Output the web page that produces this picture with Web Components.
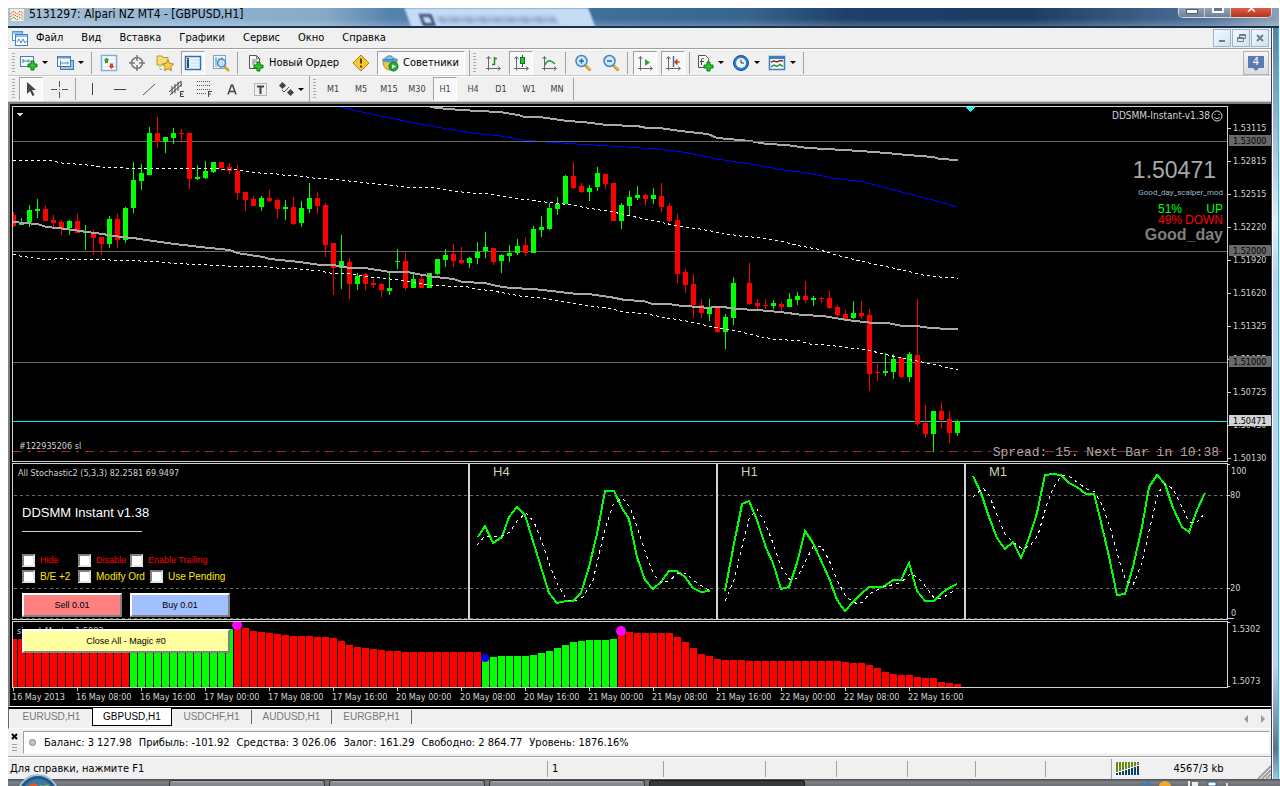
<!DOCTYPE html>
<html lang="ru">
<head>
<meta charset="utf-8">
<title>5131297: Alpari NZ MT4 - [GBPUSD,H1]</title>
<style>
html { background: #fff; }
body { margin: 0; min-height: 100vh; box-sizing: border-box; padding: 8px 0 0 8px; display: flex; flex-direction: column;
  font: 11px/14px "DejaVu Sans Condensed", "Noto Sans", sans-serif; color: #000; overflow: hidden; }
mt-window { flex: 1; margin-right: 1px; }
</style>
</head>
<body>
<mt-window>
  <mt-title-bar slot="title">5131297: Alpari NZ MT4 - [GBPUSD,H1]</mt-title-bar>
  <mt-menu-bar>
    <button>Файл</button><button>Вид</button><button>Вставка</button><button>Графики</button><button>Сервис</button><button>Окно</button><button>Справка</button>
  </mt-menu-bar>
  <mt-toolbar>
    <mt-tool icon="newchart" caret name="Новый график"></mt-tool>
    <mt-tool icon="profiles" caret name="Профили"></mt-tool>
    <mt-sep></mt-sep>
    <mt-tool icon="market" name="Обзор рынка"></mt-tool>
    <mt-tool icon="target" name="Окно данных"></mt-tool>
    <mt-tool icon="favorites" name="Навигатор"></mt-tool>
    <mt-tool icon="terminal" pressed name="Терминал"></mt-tool>
    <mt-tool icon="tester" name="Тестер"></mt-tool>
    <mt-sep></mt-sep>
    <mt-tool icon="order" wide="102">Новый Ордер</mt-tool>
    <mt-tool icon="warning" name="Редактор"></mt-tool>
    <mt-tool icon="advisor" pressed wide="88">Советники</mt-tool>
    <mt-sep band></mt-sep>
    <mt-tool icon="bars" name="Бары"></mt-tool>
    <mt-tool icon="candles" pressed name="Свечи"></mt-tool>
    <mt-tool icon="line" name="Линия"></mt-tool>
    <mt-sep></mt-sep>
    <mt-tool icon="zoomin" name="Увеличить"></mt-tool>
    <mt-tool icon="zoomout" name="Уменьшить"></mt-tool>
    <mt-sep></mt-sep>
    <mt-tool icon="autoscroll" pressed name="Автопрокрутка"></mt-tool>
    <mt-tool icon="shift" pressed name="Сдвиг графика"></mt-tool>
    <mt-sep></mt-sep>
    <mt-tool icon="indicators" caret name="Индикаторы"></mt-tool>
    <mt-tool icon="clock" caret name="Периоды"></mt-tool>
    <mt-tool icon="template" caret name="Шаблоны"></mt-tool>
    <mt-sep></mt-sep>
    <mt-news slot="end">4</mt-news>
  </mt-toolbar>
  <mt-toolbar>
    <mt-tool icon="cursor" pressed name="Курсор"></mt-tool>
    <mt-tool icon="cross" name="Перекрестие"></mt-tool>
    <mt-sep></mt-sep>
    <mt-tool icon="vline" name="Вертикальная линия"></mt-tool>
    <mt-tool icon="hline" name="Горизонтальная линия"></mt-tool>
    <mt-tool icon="trend" name="Трендовая линия"></mt-tool>
    <mt-tool icon="channel" name="Канал"></mt-tool>
    <mt-tool icon="fibo" name="Фибоначчи"></mt-tool>
    <mt-tool icon="text" name="Текст"></mt-tool>
    <mt-tool icon="label" name="Метка"></mt-tool>
    <mt-tool icon="arrows" caret wide="28" name="Стрелки"></mt-tool>
    <mt-sep band></mt-sep>
    <mt-tool>M1</mt-tool><mt-tool>M5</mt-tool><mt-tool>M15</mt-tool><mt-tool>M30</mt-tool><mt-tool pressed>H1</mt-tool><mt-tool>H4</mt-tool><mt-tool>D1</mt-tool><mt-tool>W1</mt-tool><mt-tool>MN</mt-tool>
    <mt-sep></mt-sep>
  </mt-toolbar>
  <mt-chart>
    <mt-price-pane></mt-price-pane>
    <mt-stoch-pane><mt-expert-panel></mt-expert-panel></mt-stoch-pane>
    <mt-signal-pane></mt-signal-pane>
    <mt-time-axis></mt-time-axis>
  </mt-chart>
  <mt-tabs>
    <button>EURUSD,H1</button><button aria-current="true">GBPUSD,H1</button><button>USDCHF,H1</button><button>AUDUSD,H1</button><button>EURGBP,H1</button>
  </mt-tabs>
  <mt-account>
    <span>Баланс: 3 127.98</span><span>Прибыль: -101.92</span><span>Средства: 3 026.06</span><span>Залог: 161.29</span><span>Свободно: 2 864.77</span><span>Уровень: 1876.16%</span>
  </mt-account>
  <mt-status></mt-status>
</mt-window>
<os-taskbar></os-taskbar>

<script>
const define = (name, html, setup) => {
  const tpl = document.createElement('template');
  tpl.innerHTML = html;
  customElements.define(name, class extends HTMLElement {
    connectedCallback() {
      if (this.shadowRoot) return;
      this.attachShadow({ mode: 'open' }).append(tpl.content.cloneNode(true));
      if (setup) setup(this, this.shadowRoot);
    }
  });
};

/* ---------- icons, 18x18 ---------- */
const plus = (x, y) => `<path transform="translate(${x} ${y})" d="M4 1h3v3h3v3h-3v3h-3v-3h-3v-3h3z" fill="#2fc52f" stroke="#0b7a12"/>`;
const axes = '<path d="M4.500 3v11.500H16M2.500 5l2-2.500 2 2.500M14 12.500l2.500 2-2.500 2M2 14.500h2.500v2" fill="none" stroke="#666"/>';
const lens = m => `<path d="M11.500 11.500l5 5" stroke="#c79a2a" stroke-width="3"/><path d="M12 11.500l4 4" stroke="#f5d96e"/><circle cx="7.500" cy="7" r="5.500" fill="#cfe8fb" stroke="#3f86c4" stroke-width="1.500"/><path d="${m}" stroke="#2b66a8" stroke-width="1.500"/>`;
const ICONS = {
  newchart: `<rect x=".5" y="2.500" width="13" height="10" fill="#eef6ff" stroke="#4d7eab"/><path d="M3 7h6M3 5v4M8 5.500l1.500 1.500-1.500 1.500" fill="none" stroke="#4d7eab"/>${plus(7, 6)}`,
  profiles: '<rect x="4.500" y="6.500" width="13" height="9" fill="#9cc3e6" stroke="#3f77ab"/><rect x="1.500" y="2.500" width="13" height="10" fill="#f2f8ff" stroke="#3f77ab"/><path d="M2 3.500h12" stroke="#6aa0d0" stroke-width="2"/><path d="M4 9h8M4.500 6.500v5M11 7.500l1.500 1.500-1.500 1.500" fill="none" stroke="#5d86ab"/>',
  market: '<rect x="1.500" y="1.500" width="15" height="15" fill="#fff" stroke="#7db0dc" stroke-width="1.500"/><path d="M2 5h14M2 9h14M2 13h14" stroke="#d5e4f2"/><path d="M6.500 3.500l3 3-1.500 0v2.500H5V6.500H3.500z" fill="#2aa52a"/><path d="M11.500 15l3-3H13V9.500h-3V12H8.500z" fill="#e2401c"/>',
  target: '<circle cx="9" cy="9" r="5.500" fill="none" stroke="#777" stroke-width="1.500"/><path d="M9 1v6M9 11v6M1 9h6M11 9h6" stroke="#777" stroke-width="1.500"/>',
  favorites: '<path d="M1 2h5l1 1.500h5V11H1z" fill="#f7dd7a" stroke="#c09a30"/><path d="M4 12v3.500h3" stroke="#888" stroke-dasharray="1 1" fill="none"/><path d="M12 6l1.700 3.500 4 .5-3 2.700.8 4-3.500-2-3.500 2 .8-4-3-2.700 4-.5z" fill="#fbd24b" stroke="#b3811a"/>',
  terminal: '<rect x="1.500" y="2.500" width="15" height="13" fill="#eef6ff" stroke="#2f6fb0" stroke-width="1.500"/><rect x="3" y="4" width="2" height="10" fill="#1d4f86"/><path d="M3 5.500h2" stroke="#d54"/><path d="M7 6h8M7 9h8M7 12h8" stroke="#c4daee"/>',
  tester: '<rect x="1.500" y="1.500" width="12" height="13" fill="#f0f4f8" stroke="#8aa2b8"/><path d="M4 3v10M7 4v7M3 6h2M10 3v8" stroke="#53a0cf"/><path d="M12 12l5 5" stroke="#d3a533" stroke-width="2.500"/><circle cx="9.500" cy="9" r="4" fill="#bfe0f7cc" stroke="#4a87b8" stroke-width="1.500"/>',
  order: `<path d="M2.500 1.500h7l3 3v10h-10z" fill="#f6f6f6" stroke="#555"/><path d="M9.500 1.500v3h3M5 6h5M5 8h5M5 10h3" fill="none" stroke="#777"/>${plus(6, 7)}`,
  warning: '<path d="M9 1l8 8-8 8-8-8z" fill="#f7c92c" stroke="#b5860f"/><path d="M9 4.500v5M9 11.500v2" stroke="#5a3d00" stroke-width="2"/>',
  advisor: '<path d="M2 7c0 6 3 9 7 9s7-3 7-9z" fill="#f0c64a" stroke="#b78a1d"/><ellipse cx="9" cy="6" rx="8" ry="2.500" fill="#4e9ed6"/><path d="M4.500 5.500c0-5 8-5 8 0z" fill="#7dc0ea" stroke="#3c86bd"/><circle cx="12.500" cy="12.500" r="4.500" fill="#27ae34" stroke="#0d7a1a"/><path d="M11 10.500l4 2-4 2z" fill="#fff"/>',
  bars: axes + '<path d="M10.500 3v8M10.500 4.500h2.500M8 10.500h2.500" fill="none" stroke="#1b8a2a" stroke-width="1.500"/>',
  candles: axes + '<path d="M10.500 1v12" stroke="#0f7a1d"/><rect x="8.500" y="3.500" width="4" height="6" fill="#2bc43b" stroke="#0f7a1d"/>',
  line: axes + '<path d="M5 11c2-5 5-6 10-1" fill="none" stroke="#2c9a3a" stroke-width="1.500"/>',
  zoomin: lens('M5 7h5M7.500 4.500v5'),
  zoomout: lens('M5 7h5'),
  autoscroll: axes + '<path d="M9 5l5 3.500L9 12z" fill="#29a83a"/>',
  shift: axes + '<path d="M9.500 2v11" stroke="#3a6fa5" stroke-width="1.500"/><path d="M10.500 8h5M13.500 5.500L11 8l2.500 2.500" fill="none" stroke="#c63a12" stroke-width="1.500"/>',
  indicators: `<path d="M2.500 1.500h7l3 3v9h-10z" fill="#f6f6f6" stroke="#555"/><path d="M5.500 11V6c0-2 2-2 2.500-1M4 7.500h4" fill="none" stroke="#444"/>${plus(7, 7)}`,
  clock: '<circle cx="9" cy="9" r="7.500" fill="#2d7fd0" stroke="#174a86"/><circle cx="9" cy="9" r="5" fill="#eef6ff"/><path d="M9 5.500V9h3" fill="none" stroke="#333"/>',
  template: '<rect x="1.500" y="2.500" width="15" height="13" fill="#f4f9ff" stroke="#3b7fc0" stroke-width="1.500"/><path d="M2 4h14" stroke="#3b7fc0" stroke-width="2"/><path d="M3 8l3-1 3 1 3-1.500 3 .5" fill="none" stroke="#8a2f1f" stroke-width="1.500"/><path d="M3 13l3-2 3 1.500 3-2 3 2" fill="none" stroke="#2c8a3a" stroke-width="1.500"/>',
  cursor: '<path d="M5 2v12l3-3 2.500 5 2-1-2.500-5h4z" fill="#444"/>',
  cross: '<path d="M9.500 1v6M9.500 12v6M1 9.500h6M12 9.500h6M9 9.500h1" stroke="#555"/>',
  vline: '<path d="M8.500 3v12" stroke="#444"/>',
  hline: '<path d="M2 9.500h12" stroke="#444"/>',
  trend: '<path d="M3 15L15 4" stroke="#555"/>',
  channel: '<path d="M1 12L13 1M2 15L14 4M4 6v8M7 4v9M10 2v9M13 1v6" stroke="#444"/><path d="M12.500 11v6M12 11.500h4M12 14h3M12 16.500h4" stroke="#444"/>',
  fibo: '<path d="M1 1.500h14M1 5.500h14M1 9.500h14M1 13.500h9" stroke="#555" stroke-dasharray="1 1"/><path d="M12.500 11v6M12 11.500h4M12 14h3" stroke="#444"/>',
  text: '<path d="M4 14.500L7.500 5h1l3.500 9.500M5.500 11.500h5" fill="none" stroke="#444" stroke-width="1.500"/>',
  label: '<rect x="2.500" y="3.500" width="12" height="12" fill="none" stroke="#777" stroke-dasharray="1 1"/><path d="M5 6.500h7M8.500 6v8" stroke="#444" stroke-width="2"/>',
  arrows: '<path d="M4.500 2l3.500 3.500-3.500 3.500L1 5.500zM12.500 9l3.500 3.500-3.500 3.500L9 12.500z" fill="#444"/><path d="M4 10l2 2 5-5" fill="none" stroke="#444"/>'
};

/* ---------- window chrome ---------- */
define('mt-window', `
<style>
:host { display: grid; grid-template-columns: minmax(0, 1fr) 8px; grid-template-rows: 20px minmax(0, 1fr); }
.title { grid-column: 1 / 3; }
.body { display: flex; flex-direction: column; background: #f0f0f0; min-width: 0; }
.edge { background: linear-gradient(90deg, #33475c 1px, #fff 1px 2px, transparent 2px 7px, #1cc4f2 7px),
  linear-gradient(180deg, #5b7f9f 0, #b6cde2 18%, #e4edf6 26%, #b9d3ee 33%, #bcd5ee 85%, #5d738a 96%, #a9c4dc); }
::slotted(mt-chart) { flex: 1; }
</style>
<div class="title"><slot name="title"></slot></div>
<div class="body"><slot></slot></div>
<div class="edge"></div>`);

define('mt-title-bar', `
<style>
:host { display: flex; align-items: flex-start; height: 20px; box-sizing: border-box; border-bottom: 2px solid #16324e; overflow: hidden; position: relative;
  background: linear-gradient(180deg, transparent 60%, #ffffff33), linear-gradient(90deg, #a8c0d4 0, #8fb2d1 16%, #86a9c8 25%, #5583ad 30%, #41709c 45%, #38658f 58%, #1d4069 66%, #1a3c63 80%, #4c7098 94%, #8ba2b8); }
svg { margin: 1px 5px 0 2px; flex: none; z-index: 1; }
h1 { margin: 0; font: 12px/13px "DejaVu Sans Condensed", sans-serif; z-index: 1; flex: 1; }
.glass { position: absolute; left: 400px; top: 0; width: 184px; height: 20px; background: #c5dcf5; transform: skewX(20deg); filter: blur(1px); }
.glass i { position: absolute; left: 12px; top: 6px; width: 13px; height: 12px; border: 3px solid #454d7a; box-sizing: border-box; }
.glass b { position: absolute; left: 30px; top: 9px; width: 118px; height: 6px; background: repeating-linear-gradient(90deg, #8296b4 0 5px, #a9c0dd 5px 8px, #95a9c5 8px 12px, #b4cae6 12px 14px); filter: blur(2px); }
.ctl { display: flex; margin-right: 7px; height: 10px; border: 1px solid #cfdae4; border-top: 0; border-radius: 0 0 5px 5px; overflow: hidden; box-sizing: border-box; z-index: 1; }
button { border: 0; border-right: 1px solid #c4cfd9; padding: 0; width: 26px; height: 10px; background: linear-gradient(#94a5b5, #667d94); position: relative; }
button::after { content: ""; position: absolute; left: 7px; top: 1px; width: 12px; height: 5px; background: #fff; border: 1px solid #4d5b69; box-sizing: border-box; }
button.max::after { top: 0; background: #62778c; border: 2px solid #fff; border-top: 0; }
button.x { width: 40px; border: 0; background: linear-gradient(#d7604b, #b52a12); }
button.x::after { left: 14px; top: 0; width: 12px; height: 7px; border: 0; background: none; content: "✕"; color: #fff; font: 13px/2px sans-serif; }
</style>
<div class="glass"><i></i><b></b></div>
<svg width="14" height="12" viewBox="0 0 14 12"><rect width="14" height="12" fill="#f5efe0"/><path d="M0 5l4-3 3 3 3-3 4 3M0 8l4-3 3 3 3-3 4 3" fill="none" stroke="#d0573f" stroke-dasharray="2 1"/><path d="M0 11l4-3 3 3 3-3 4 3" fill="none" stroke="#5a9a4a" stroke-dasharray="2 1"/></svg>
<h1><slot></slot></h1>
<div class="ctl"><button aria-label="Свернуть"></button><button class="max" aria-label="Развернуть"></button><button class="x" aria-label="Закрыть"></button></div>`);

define('mt-menu-bar', `
<style>
:host { display: flex; align-items: center; height: 21px; box-sizing: border-box; padding: 0 2px 0 4px; border-bottom: 1px solid #a0a0a0; background: #f0f0f0; }
nav { display: flex; flex: 1; gap: 18px; margin-left: 8px; }
::slotted(button) { border: 0; background: none; padding: 0; font: inherit; color: #000; }
.mdi { display: flex; gap: 1px; }
.mdi button { width: 18px; height: 18px; padding: 0; border: 1px solid #9db4c8; background: linear-gradient(135deg, #f4faff, #cfe2f3); }
.mdi svg { display: block; }
</style>
<svg width="16" height="16" viewBox="0 0 16 16"><rect x=".5" y="1.500" width="10" height="9" fill="#fff" stroke="#4d94dc"/><rect x="3.500" y="4.500" width="12" height="11" fill="#fff" stroke="#3a86d4"/><path d="M1 3h9M4 6h11" stroke="#8fc0f0" stroke-width="2"/><path d="M5 12l2-3 2 4 2-4 2 4 2-2" fill="none" stroke="#4a8ac8"/></svg>
<nav><slot></slot></nav>
<div class="mdi">
<button aria-label="Свернуть график"><svg width="16" height="16"><path d="M5 11h6" stroke="#6c7d8e" stroke-width="2"/></svg></button>
<button aria-label="Восстановить график"><svg width="16" height="16"><path d="M6.500 7V4.500h6v4H11M4.500 7.500h6v4h-6zM4.500 8.500h6M6.500 5.500h6" fill="none" stroke="#6c7d8e"/></svg></button>
<button aria-label="Закрыть график"><svg width="16" height="16"><path d="M5 5l6 6M11 5l-6 6" stroke="#6c7d8e" stroke-width="2"/></svg></button>
</div>`);

define('mt-toolbar', `
<style>
:host { display: flex; align-items: center; gap: 4px; height: 26px; padding-left: 4px; background: #f0f0f0; box-shadow: inset 0 1px #fff, inset 0 -1px #c8c8c8; }
:host(:first-of-type) { height: 27px; }
.grip { width: 3px; height: 20px; background: repeating-linear-gradient(#a8a8a8 0 1px, #f0f0f0 1px 3px); }
.end { margin-left: auto; padding-right: 2px; }
</style>
<div class="grip"></div><slot></slot><div class="end"><slot name="end"></slot></div>`);

define('mt-sep', `
<style>
:host { display: block; width: 2px; height: 22px; box-sizing: border-box; border-left: 1px solid #a0a0a0; }
:host([band]) { width: 8px; height: 26px; background: repeating-linear-gradient(#a8a8a8 0 1px, #f0f0f0 1px 3px) right 1px top 3px / 3px 20px no-repeat; }
</style>`);

define('mt-tool', `
<style>
:host { display: block; }
button { display: flex; align-items: center; justify-content: center; width: 24px; height: 24px; padding: 0; border: 1px solid transparent; box-sizing: border-box; background: none; font: 9px/12px "DejaVu Sans Condensed", sans-serif; color: #404040; white-space: nowrap; }
button.label { font-size: 11px; color: #000; justify-content: flex-start; padding-left: 3px; gap: 4px; }
:host([caret]) button { width: 32px; justify-content: flex-start; gap: 4px; }
:host([caret][wide]) button { width: 28px; gap: 2px; }
:host([pressed]) button { background: #f8f8f8; border-color: #a0a0a0 #fff #fff #a0a0a0; }
svg { flex: none; display: block; }
i { border: 3px solid transparent; border-top-color: #000; border-bottom: 0; }
</style>
<button><slot></slot></button>`, (el, root) => {
  const b = root.querySelector('button');
  const icon = ICONS[el.getAttribute('icon')];
  if (icon) b.insertAdjacentHTML('afterbegin', `<svg width="18" height="18" viewBox="0 0 18 18">${icon}</svg>`);
  if (el.hasAttribute('name')) b.setAttribute('aria-label', el.getAttribute('name'));
  if (el.hasAttribute('caret')) b.insertAdjacentHTML('beforeend', '<i></i>');
  else if (el.hasAttribute('wide')) { b.className = 'label'; b.style.width = el.getAttribute('wide') + 'px'; }
});

define('mt-news', `
<style>
:host { display: block; }
button { display: flex; align-items: center; justify-content: center; width: 26px; height: 24px; padding: 0; border: 1px solid #b4b4b4; background: linear-gradient(#f4f4f4, #dcdcdc); }
span { position: relative; width: 16px; height: 12px; margin-bottom: 2px; background: #5b7ab0; color: #fff; font: 10px/12px "DejaVu Sans", sans-serif; }
span::after { content: ""; position: absolute; left: 5px; top: 12px; border: 3px solid transparent; border-top-color: #5b7ab0; border-bottom: 0; }
</style>
<button aria-label="Новости"><span><slot></slot></span></button>`);

/* ---------- chart ---------- */
const paneCss = `
:host { display: grid; grid-template-columns: minmax(0, 1fr) 43px; }
.plot { position: relative; border: 1px solid #d3d3d3; overflow: hidden; min-width: 0; }
svg { display: block; width: 100%; height: 100%; position: absolute; inset: 0; }
.axis { position: relative; overflow: hidden; }
text { font: 9px "DejaVu Sans Condensed", sans-serif; fill: #d3d3d3; }`;

/* Chart series are stored in thirds of a pixel. */
const third = v => Math.round(v / 3);
const poly = (s, dx, dy) => s.trim().split(/\s+/).map(p => { const [x, y] = p.split(','); return third(x) + dx + ',' + (third(y) + dy); }).join(' ');

define('mt-chart', `
<style>
:host { display: flex; flex-direction: column; gap: 1px; min-height: 0; background: #000; border: solid #808080; border-width: 2px 0 0 2px; border-bottom: 1px solid #fff; padding: 2px 0 0 2px; }
::slotted(mt-price-pane) { flex: 1; }
::slotted(mt-stoch-pane) { height: 157px; }
::slotted(mt-signal-pane) { height: 67px; }
::slotted(mt-time-axis) { height: 17px; margin-top: -1px; padding-bottom: 1px; }
</style><slot></slot>`);

const CANDLES = `r336,380,345,378 g354,375,366,375 g315,381,330,366 g297,354,327,333 r318,363,327,363 r345,381,360,369 r360,405,366,387 g360,405,363,384 r342,399,363,399 g375,450,396,399
r390,465,399,414 r411,465,411,432 g348,444,357,432 r342,444,357,420 g321,429,324,420 g186,339,240,324 g192,270,219,243 g81,225,99,225 r51,144,99,126 g111,159,111,126
g84,132,99,114 r87,126,99,102 r99,267,99,237 g195,240,231,237 g183,237,213,234 g186,219,186,216 r186,213,186,204 r189,222,201,213 r195,300,213,279 r276,333,276,300
r288,318,297,318 g288,333,294,321 r270,306,294,303 r297,354,300,327 g300,360,321,327 r291,375,321,372 g303,381,324,369 g249,339,294,327 r276,342,294,318 r309,471,315,435
r429,585,429,504 g405,567,483,504 r474,597,486,552 g519,570,528,552 r519,570,522,552 r537,564,549,555 r549,591,552,570 g516,585,564,573 g447,507,483,486 r459,570,483,564
g519,564,537,564 r522,564,537,564 g519,564,519,564 g477,525,477,522 g447,501,465,480 r432,501,462,483 r441,492,480,489 g471,504,474,489 g426,492,456,474 g396,474,441,453
r444,495,444,486 g462,519,465,483 g435,486,459,468 g417,465,438,459 r414,468,435,459 g378,459,387,459 g348,411,381,390 g309,390,324,387 g291,345,312,327 g225,312,228,312
r186,267,228,264 r249,279,258,276 g255,303,264,276 g201,273,219,261 r222,267,222,252 r249,363,249,363 g309,387,315,363 g273,345,291,318 g258,300,285,294 r282,318,285,297
g264,312,285,297 r249,336,288,321 r309,366,318,363 r342,549,360,522 r507,579,516,555 r522,654,552,615 r597,654,615,639 g597,663,624,642 r621,699,621,696 g642,747,651,696
g531,675,549,654 - r489,615,549,612 r597,630,609,618 r597,627,615,618 g600,627,609,618 r606,636,612,621 g579,621,597,621 g576,615,588,600 r543,609,588,600
g588,618,594,600 r591,609,594,597 r573,627,594,624 r615,648,621,645 r630,660,642,657 g603,657,639,654 r603,657,639,648 r627,873,645,822 r792,843,816,819 g759,828,813,819
g762,837,777,816 r771,834,774,831 g756,846,762,831 r597,978,765,972 r915,1014,969,1002 g933,1056,933,1002 r906,984,933,960 r933,1029,957,999 g960,1008,963,999`;

const UPPER = '39,181 145,181 185,190 260,194 310,202 370,205 600,205 710,210 780,219 830,222 850,226 900,228 940,234 1020,241 1070,247 1130,251 1160,256 1220,260 1285,260 1360,272 1410,280 1470,283 1500,289 1560,296 1610,302 1660,309 1720,316 1760,323 1840,337 1920,354 1980,366 2030,377 2100,388 2180,401 2220,409 2290,414 2340,423 2400,438 2450,448 2490,458 2520,468 2580,483 2650,497 2720,512 2770,524 2820,532 2850,532 2873,538';
const LOWER = '39,463 60,468 120,477 165,478 180,475 200,478 270,481 300,478 330,481 400,481 420,484 480,485 510,490 560,492 620,496 680,497 710,502 730,499 760,502 790,499 830,505 900,508 960,514 990,520 1050,523 1110,530 1140,535 1200,541 1280,556 1320,556 1360,562 1390,558 1430,568 1480,574 1560,588 1620,593 1680,604 1750,616 1840,628 1870,636 1940,643 1970,647 2000,654 2040,660 2090,670 2120,677 2160,685 2210,693 2270,709 2320,717 2400,724 2430,732 2480,735 2550,743 2600,751 2703,775 2766,786 2811,795 2873,811';
const MID = '39,366 110,373 140,381 200,387 260,396 310,402 340,409 400,415 500,428 600,440 690,451 710,460 790,470 810,476 900,487 960,495 1000,495 1050,503 1095,505 1170,516 1220,517 1270,524 1305,531 1360,538 1390,546 1455,549 1490,558 1530,564 1600,567 1680,576 1730,582 1765,582 1830,591 1875,601 1930,603 1960,611 2005,613 2050,619 2100,622 2125,624 2145,621 2170,621 2210,627 2270,631 2340,636 2410,645 2470,649 2540,659 2620,669 2660,670 2710,678 2750,678 2790,684 2850,686 2873,687';
const TOP = '1290,21 1340,26 1430,32 1500,37 1555,44 1575,50 1620,52 1700,63 1750,65 1820,74 1910,79 1940,84 1980,84 2040,92 2125,102 2150,113 2250,124 2300,131 2360,134 2420,143 2480,147 2530,151 2580,153 2660,160 2720,165 2800,171 2820,177 2873,181';
const BLUE = '1020,21 1070,32 1140,47 1260,71 1340,86 1420,99 1500,108 1570,121 1638,127 1730,131 1830,138 1970,146 2050,156 2150,178 2270,196 2330,206 2420,220 2500,234 2590,247 2670,267 2740,284 2800,300 2850,314 2870,322';

define('mt-price-pane', `
<style>${paneCss}
.corner { position: absolute; top: 2px; right: 4px; display: flex; flex-direction: column; align-items: flex-end; color: #d3d3d3; white-space: pre; font: 9px/14px "Liberation Sans", sans-serif; }
.name { font: 10px/14px "DejaVu Sans Condensed", sans-serif; display: flex; align-items: center; gap: 1px; }
.name svg { position: static; width: 12px; height: 12px; }
.price { font-size: 23px; line-height: 26px; margin: 34px 7px 0 0; color: #a9a9a9; }
.mod { font: 8px/10px Roboto, sans-serif; margin-top: 5px; color: #9ab8cc; }
.up, .down { font-size: 12px; line-height: 11px; color: #0f0; display: flex; justify-content: space-between; width: 65px; }
.up { margin-top: 6px; }
.down { color: #f00; }
.good { font: bold 16px/18px "Liberation Sans", sans-serif; color: #808080; }
.spread { position: absolute; right: 8px; bottom: 0; font: 13px/16px "Liberation Mono", monospace; color: #a9a9a9; }
</style>
<div class="plot"><svg shape-rendering="crispEdges"></svg>
<div class="corner"><div class="name">DDSMM-Instant-v1.38<svg viewBox="0 0 12 12"><circle cx="6" cy="6" r="5" fill="none" stroke="#d3d3d3"/><path d="M4 4v1M8 4v1M3.500 7.500q2.500 2.500 5 0" fill="none" stroke="#d3d3d3"/></svg></div>
<div class="price">1.50471</div><div class="mod">Good_day_scalper_mod</div>
<div class="up"><span>51%</span><span>UP</span></div><div class="down"><span>49%</span><span>DOWN</span></div><div class="good">Good_day</div></div>
<div class="spread">Spread: 15. Next Bar in 10:38</div></div>
<div class="axis"><svg class="scale" shape-rendering="crispEdges"></svg></div>`, (el, root) => {
  const OX = -13, OY = -7;
  let candles = '';
  CANDLES.trim().split(/\s+/).forEach((c, k) => {
    if (c === '-') return;
    const color = c[0] === 'r' ? '#f00' : '#0f0', x = 8 * k;
    const [h, l, t, b] = c.slice(1).split(',').map(v => third(v) - 7);
    candles += `<path fill="${color}" d="M${x} ${h}h1V${l}h-1zM${x - 2} ${t}h5V${b}h-5z"/>`;
  });
  const line = (s, attrs) => `<polyline points="${poly(s, OX, OY)}" fill="none" ${attrs}/>`;
  const level = y => `<rect x="0" y="${y}" width="100%" height="1" fill="#696969"/>`;
  root.querySelector('svg').innerHTML =
    line(TOP, 'stroke="#a9a9a9" stroke-width="2"') + line(BLUE, 'stroke="#00f"') +
    level(34) + level(144) + level(255) +
    '<rect x="0" y="314" width="100%" height="1" fill="#00e8f0"/>' +
    '<path d="M0 344.500H4000" stroke="#b22222" stroke-dasharray="9 6 3 6"/>' +
    candles + line(MID, 'stroke="#a9a9a9" stroke-width="2"') +
    line(UPPER, 'stroke="#fff" stroke-dasharray="3 3"') + line(LOWER, 'stroke="#fff" stroke-dasharray="3 3"') +
    '<path d="M3 6h7l-3 4z" fill="#d3d3d3"/><path d="M952 0h10l-5 5z" fill="#0ff"/>' +
    '<text x="6" y="342">#122935206 sl</text>';
  const labels = [[22, '1.53115'], [55, '1.52815'], [88, '1.52515'], [121, '1.52220'], [154, '1.51920'], [187, '1.51620'], [220, '1.51325'], [253, '1.51025'], [286, '1.50725'], [319, '1.50430'], [352, '1.50130']];
  const boxes = [[35, '1.53000', '#696969', '#000'], [145, '1.52000', '#696969', '#000'], [256, '1.51000', '#696969', '#000'], [315, '1.50471', '#d3d3d3', '#000']];
  root.querySelector('.scale').innerHTML =
    labels.map(([y, t]) => `<rect x="0" y="${y}" width="3" height="1" fill="#d3d3d3"/><text x="5" y="${y + 3}">${t}</text>`).join('') +
    boxes.map(([y, t, bg, fg]) => `<rect x="1" y="${y - 6}" width="42" height="11" fill="${bg}"/><text x="5" y="${y + 3}" style="fill:${fg}">${t}</text>`).join('');
});

const STOCH = [
  ['54,230 75,198 100,249 126,232 148,170 172,140 196,166 268,398 292,430 318,424 340,423 364,400 388,322 412,222 436,92 461,92 485,145 508,178 532,290 556,360 580,387 604,366 628,332 652,332 676,350 700,384 722,396 750,392',
   '52,254 75,228 125,227 150,215 170,184 197,160 222,186 245,245 270,318 293,375 320,420 345,424 370,410 400,360 436,208 460,135 485,113 510,142 535,210 560,290 582,345 605,370 628,364 652,343 678,340 700,360 725,378 748,390'],
  ['796,392 820,268 845,132 868,122 892,180 918,265 940,310 964,386 988,382 1012,310 1036,214 1060,250 1108,355 1132,420 1156,454 1180,426 1204,402 1226,382 1270,381 1298,360 1324,360 1348,310 1372,392 1394,422 1422,422 1445,398 1468,383 1492,372',
   '796,424 822,360 845,260 868,178 890,148 915,190 940,250 964,320 990,360 1012,355 1036,305 1060,262 1084,257 1108,300 1132,360 1158,412 1190,433 1208,425 1228,402 1250,390 1270,381 1320,368 1350,342 1370,352 1390,368 1422,414 1445,414 1468,402 1490,386'],
  ['1540,48 1562,98 1588,170 1612,234 1636,268 1660,246 1684,294 1708,235 1732,160 1756,45 1780,41 1804,45 1828,70 1852,80 1878,102 1902,102 1920,175 1945,275 1970,404 1996,402 2020,320 2045,200 2068,80 2092,46 2116,72 2140,145 2165,200 2188,215 2212,150 2236,98',
   '1540,112 1568,83 1588,105 1610,165 1636,222 1660,246 1686,268 1710,257 1734,225 1758,140 1780,85 1805,46 1830,50 1855,68 1880,86 1904,96 1930,140 1952,210 1976,300 1998,362 2018,376 2045,310 2070,200 2095,100 2115,72 2138,88 2162,135 2188,185 2212,187 2234,160']
];

define('mt-stoch-pane', `
<style>${paneCss}
.big { font: 13px "Liberation Sans", sans-serif; fill: #c8d2b4; }
.plot { overflow: visible; }
.plot svg { overflow: hidden; }
::slotted(*) { position: absolute; left: 9px; top: 40px; z-index: 2; }
</style>
<div class="plot"><svg shape-rendering="crispEdges"></svg><slot></slot></div>
<div class="axis"><svg class="scale" shape-rendering="crispEdges"></svg></div>`, (el, root) => {
  const level = y => `<path d="M1 ${y}.5H4000" stroke="#696969" stroke-dasharray="3 3"/>`;
  root.querySelector('svg').innerHTML = level(31) + level(124) + level(154) +
    [455, 703, 951].map(x => `<rect x="${x}" y="0" width="2" height="100%" fill="#d3d3d3"/>`).join('') +
    STOCH.map(([g, w]) => `<polyline points="${poly(g, 447, -4)}" fill="none" stroke="#0f0" stroke-width="2"/><polyline points="${poly(w, 447, -4)}" fill="none" stroke="#fff" stroke-dasharray="3 4"/>`).join('') +
    '<text x="5" y="12">All Stochastic2 (5,3,3) 82.2581 69.9497</text><text class="big" x="480" y="12">H4</text><text class="big" x="728" y="12">H1</text><text class="big" x="976" y="12">M1</text>';
  root.querySelector('.scale').innerHTML = '<path d="M0 1.500h2M0 32.500h2M0 125.500h2M0 155.500h6" stroke="#d3d3d3"/><text x="3" y="11">100</text><text x="2" y="35">80</text><text x="2" y="128">20</text><text x="3" y="153">0</text>';
});

define('mt-expert-panel', `
<style>
:host { display: block; width: 208px; font: 9px/13px "Liberation Sans", sans-serif; }
h2 { margin: 0; font: 13px/18px "Liberation Sans", sans-serif; color: #fff; width: 128px; white-space: nowrap; }
hr { width: 120px; margin: 9px 0 22px; border: 0; border-top: 1px solid #d3d3d3; }
.row { display: flex; margin-bottom: 3px; white-space: nowrap; }
label { display: flex; gap: 5px; width: 56px; color: #f00; }
label.tight { width: 52px; }
label.wide { width: 72px; }
.y label { color: #ffe800; font-size: 10px; }
input { appearance: none; flex: none; margin: 0; width: 13px; height: 13px; background: #fff; border: 2px solid; border-color: #808080 #e3e3e3 #e3e3e3 #808080; box-sizing: border-box; }
.btns { display: grid; grid-template-columns: 1fr 1fr; gap: 12px 8px; margin-top: 10px; }
button { height: 24px; padding: 0; border: 2px solid; border-color: #fff #808080 #808080 #fff; font: inherit; color: #000; }
.sell { background: #ff8080; }
.buy { background: #a0c0ff; }
.all { grid-column: 1 / 3; background: #ffffa0; }
</style>
<h2>DDSMM Instant v1.38</h2><hr>
<div class="row"><label><input type="checkbox">Hide</label><label class="tight"><input type="checkbox">Disable</label><label><input type="checkbox">Enable Trailing</label></div>
<div class="row y"><label><input type="checkbox">B/E +2</label><label class="wide"><input type="checkbox">Modify Ord</label><label><input type="checkbox">Use Pending</label></div>
<div class="btns"><button class="sell">Sell 0.01</button><button class="buy">Buy 0.01</button><button class="all">Close All - Magic #0</button></div>`);

define('mt-signal-pane', `
<style>${paneCss}</style>
<div class="plot"><svg shape-rendering="crispEdges"></svg></div>
<div class="axis"><svg class="scale" shape-rendering="crispEdges"></svg></div>`, (el, root) => {
  const rep = (v, n) => Array(n).fill(v);
  const tops = [...rep(17, 14), ...rep(16, 4), ...rep(14, 4), 12, 11, 10, 9, 7,
    5, 6, 9, 10, 11, 12, 13, 14, 14, 14, 15, 15, 16, 19, 23, 25, 26, 27, 28, 29, 29, ...rep(30, 10),
    36, 35, ...rep(34, 4), 33, 31, 29, 26, 23, 20, 19, ...rep(18, 3), 17,
    10, 10, ...rep(11, 5), 15, 20, 26, 32, 34, 37, ...rep(38, 3), ...rep(39, 12), 40, 41, 41, 43, 46, 50, 52, 53, 53, 55, 56, 56, 60, 61, 62];
  const green = k => (k >= 14 && k < 27) || (k >= 58 && k < 75);
  root.querySelector('svg').innerHTML = '<rect x="0" y="17" width="4" height="60" fill="#f00"/>' +
    tops.map((t, k) => `<rect x="${5 + 8 * k}" y="${t}" width="7" height="80" fill="${green(k) ? '#0f0' : '#f00'}"/>`).join('') +
    '<g shape-rendering="auto"><circle cx="224" cy="3" r="5" fill="#f0f"/><circle cx="472" cy="36" r="4" fill="#00f"/><circle cx="608" cy="9" r="5" fill="#f0f"/></g>' +
    '<text x="4" y="12">signal_Master 1.5083</text>';
  root.querySelector('.scale').innerHTML = '<path d="M0 1.500h2M0 65.500h2" stroke="#d3d3d3"/><text x="4" y="11">1.5302</text><text x="4" y="63">1.5073</text>';
});

define('mt-time-axis', `
<style>
:host { display: block; }
svg { display: block; width: 100%; height: 100%; }
text { font: 9px "DejaVu Sans Condensed", sans-serif; fill: #d3d3d3; }
</style><svg shape-rendering="crispEdges"></svg>`, (el, root) => {
  const t = ['16 May 2013', '16 May 08:00', '16 May 16:00', '17 May 00:00', '17 May 08:00', '17 May 16:00', '20 May 00:00', '20 May 08:00', '20 May 16:00', '21 May 00:00', '21 May 08:00', '21 May 16:00', '22 May 00:00', '22 May 08:00', '22 May 16:00'];
  root.querySelector('svg').innerHTML = t.map((s, k) => `<rect x="${1 + 64 * k}" y="0" width="1" height="3" fill="#d3d3d3"/><text x="${64 * k}" y="12">${s}</text>`).join('');
});

/* ---------- lower bars ---------- */
define('mt-tabs', `
<style>
:host { display: flex; height: 22px; box-sizing: border-box; border-top: 2px solid #000; border-bottom: 1px solid #fff; border-left: 1px solid #666; padding-left: 3px; background: #f0f0f0; }
::slotted(button) { width: 80px; height: 14px; margin-top: 1px; padding: 0; border: 0; border-right: 1px solid #666; font: 10px/14px "Liberation Sans", sans-serif; color: #777; background: none; }
::slotted(button:first-child), ::slotted([aria-current]) { border-right-color: transparent; }
::slotted(button[aria-current]) { height: 18px; margin-top: -1px; background: #fff; color: #000; border: 1px solid #000; border-top: 0; }
.nav { margin-left: auto; display: flex; align-items: center; gap: 13px; padding-right: 6px; }
i { border: 4px solid transparent; border-right: 4px solid #999; border-left: 0; }
i + i { border-left: 4px solid #999; border-right: 0; }
</style><slot></slot><div class="nav"><i></i><i></i></div>`);

define('mt-account', `
<style>
:host { display: flex; height: 28px; box-sizing: border-box; padding: 2px 1px 2px 3px; background: #f0f0f0; border-bottom: 1px solid #a0a0a0; }
.side { width: 12px; flex: none; }
.side svg { display: block; }
.box { flex: 1; display: flex; align-items: center; background: #fff; border: 1px solid; border-color: #a0a0a0 #f4f4f4 #f4f4f4 #a0a0a0; padding-left: 5px; white-space: pre; }
.dot { width: 5px; height: 5px; border: 1px solid #808080; border-radius: 50%; background: #c8c8c8; margin-right: 8px; }
.vals { display: flex; gap: 7px; }
</style>
<div class="side"><svg width="9" height="24"><path d="M1 3l5 5M6 3L1 8" stroke="#000" stroke-width="2"/><path d="M1 13.500h5M1 16.500h5M1 19.500h5" stroke="#a0a0a0"/></svg></div>
<div class="box"><span class="dot"></span><div class="vals"><slot></slot></div></div>`);

define('mt-status', `
<style>
:host { display: grid; grid-template-columns: minmax(0, 1fr) 116px 102px 71px 71px 68px 70px 66px 160px; align-items: center; height: 22px; background: #f0f0f0; border-top: 1px solid #fff; box-sizing: border-box; }
div { height: 16px; line-height: 16px; border-left: 1px solid #a0a0a0; padding-left: 4px; box-sizing: border-box; }
.hint { border: 0; padding-left: 2px; }
.net { display: flex; justify-content: space-between; align-items: center; height: 20px; }
.grip { align-self: flex-end; }
</style>
<div class="hint">Для справки, нажмите F1</div><div>1</div><div></div><div></div><div></div><div></div><div></div><div></div>
<div class="net"><svg class="bars" width="24" height="13" shape-rendering="crispEdges"></svg><span>4567/3 kb</span><svg class="grip" width="14" height="14"><path d="M1 14L14 1M5 14L14 5M9 14L14 9M13 14L14 13" stroke="#a0a0a0" stroke-width="2"/></svg></div>`, (el, root) => {
  let s = '';
  for (let k = 0; k < 8; k++) s += `<rect x="${k * 3}" y="0" width="2" height="${10 - k}" fill="#6b8a14"/><rect x="${k * 3}" y="${11 - k}" width="2" height="${2 + k}" fill="#0e3f66"/>`;
  root.querySelector('.bars').innerHTML = s;
});

define('os-taskbar', `
<style>
:host { display: flex; gap: 4px; height: 7px; background: linear-gradient(#4a4d50, #7d8185 3px, #6b6f73); position: relative; padding-left: 161px; }
.orb { position: absolute; left: 9px; bottom: 0; }
i { width: 156px; height: 6px; margin-top: 1px; box-sizing: border-box; border: 1px solid #33363a; border-bottom: 0; border-radius: 3px 3px 0 0; background: linear-gradient(#b4b7ba, #85898d 2px); }
i.on { background: #36393c; border-color: #17191b; }
.tray { position: absolute; right: 4px; bottom: 0; }
</style>
<i></i><i></i><i></i><i class="on"></i>
<svg class="orb" width="42" height="12" viewBox="0 0 42 12"><circle cx="21" cy="21" r="20" fill="#29567e" stroke="#9cc4de" stroke-width="2"/><circle cx="21" cy="21" r="16" fill="#3d78a6"/><path d="M11 12q5-5 10-1l-1 3H9z" fill="#e2572b"/><path d="M23 11q4 2 9-1l-2 4h-8z" fill="#8cc63e"/></svg>
<svg class="tray" width="136" height="5" viewBox="0 0 136 5"><path d="M1 2h5v2H1zM7 1h4v3H7z" fill="#2b7fc4"/><circle cx="25" cy="6" r="6" fill="#f2a72c"/><path d="M48 0h2v5h-2zM52 1h6v4h-6z" fill="#eee"/><rect x="68" y="1" width="8" height="4" fill="#fff" stroke="#2c5f94"/><path d="M86 5V2h2v3" fill="#ddd"/></svg>`);
</script>
</body>
</html>
